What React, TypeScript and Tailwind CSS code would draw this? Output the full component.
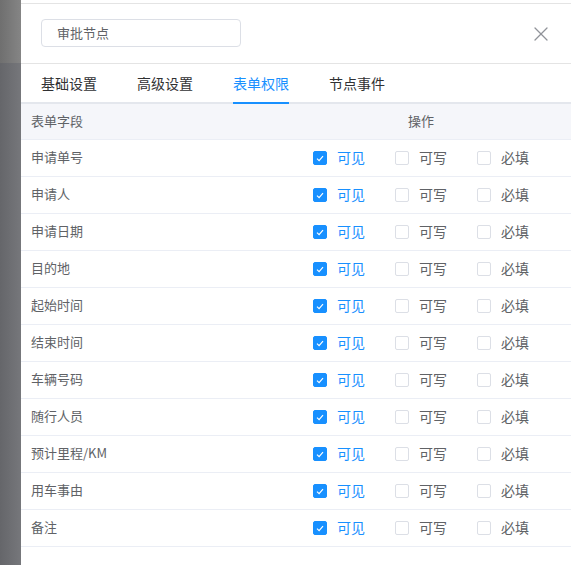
import { X } from 'lucide-react';

const fields = [
  '申请单号',
  '申请人',
  '申请日期',
  '目的地',
  '起始时间',
  '结束时间',
  '车辆号码',
  '随行人员',
  '预计里程/KM',
  '用车事由',
  '备注',
];

const tabs = ['基础设置', '高级设置', '表单权限', '节点事件'];

function Check({ checked, label }: { checked: boolean; label: string }) {
  return (
    <label className="flex items-center gap-[10px] mr-[30px] last:mr-0 cursor-pointer">
      {checked ? (
        <span className="w-[14px] h-[14px] rounded-[2px] bg-[#1890ff] border border-[#1890ff] flex items-center justify-center">
          <svg width="8" height="7" viewBox="0 0 8 7" fill="none">
            <path d="M1 3.6 L3.1 5.6 L7 1.2" stroke="white" strokeWidth="1.2" />
          </svg>
        </span>
      ) : (
        <span className="w-[14px] h-[14px] rounded-[2px] bg-white border border-[#dcdfe6]" />
      )}
      <span className={`text-[14px] leading-none pb-[2px] ${checked ? 'text-[#1890ff]' : 'text-[#606266]'}`}>{label}</span>
    </label>
  );
}

export default function App() {
  return (
    <div
      className="flex w-[571px] h-[565px] overflow-hidden"
      style={{ fontFamily: '"Noto Sans CJK SC", "Noto Sans", sans-serif' }}
    >
      <div className="w-[21px] shrink-0 flex flex-col">
        <div className="h-[63px] bg-gradient-to-r from-[#6f6f6f] to-[#858585]" />
        <div className="flex-1 bg-gradient-to-r from-[#65666a] to-[#76777b]" />
      </div>
      <div className="flex-1 bg-white flex flex-col">
        <div className="h-[3px]" />
        <div className="h-[61px] border-t border-b border-[#e4e4e4] flex items-center justify-between pl-[20px] pr-[18px]">
          <div className="w-[200px] h-[28px] border border-[#dcdfe6] rounded-[4px] flex items-center px-[15px] pb-[1px] text-[13px] text-[#606266] mt-[-1px]">
            审批节点
          </div>
          <X className="w-[24px] h-[24px] text-[#909399]" strokeWidth={1.3} />
        </div>
        <div className="relative h-[40px] flex pl-[20px]">
          <div className="absolute left-0 right-0 bottom-0 h-[2px] bg-[#e4e7ed]" />
          {tabs.map((t, i) => (
            <div
              key={t}
              className={`relative flex items-center text-[14px] pb-[2px] mr-[40px] ${i === 2 ? 'text-[#1890ff]' : 'text-[#303133]'}`}
            >
              {t}
              {i === 2 && <div className="absolute left-0 right-0 bottom-0 h-[2px] bg-[#1890ff]" />}
            </div>
          ))}
        </div>
        <div className="flex h-[36px] bg-[#f5f6fa] border-b border-[#ebeef5] text-[13px] text-[#606266]">
          <div className="w-[250px] flex items-center px-[10px] pb-[2px]">表单字段</div>
          <div className="flex-1 flex items-center justify-center pb-[2px]">操作</div>
        </div>
        {fields.map((f) => (
          <div key={f} className="flex h-[37px] border-b border-[#ebeef5]">
            <div className="w-[250px] flex items-center px-[10px] pb-[2px] text-[13px] text-[#606266]">{f}</div>
            <div className="flex-1 flex items-center justify-center">
              <Check checked label="可见" />
              <Check checked={false} label="可写" />
              <Check checked={false} label="必填" />
            </div>
          </div>
        ))}
      </div>
    </div>
  );
}
